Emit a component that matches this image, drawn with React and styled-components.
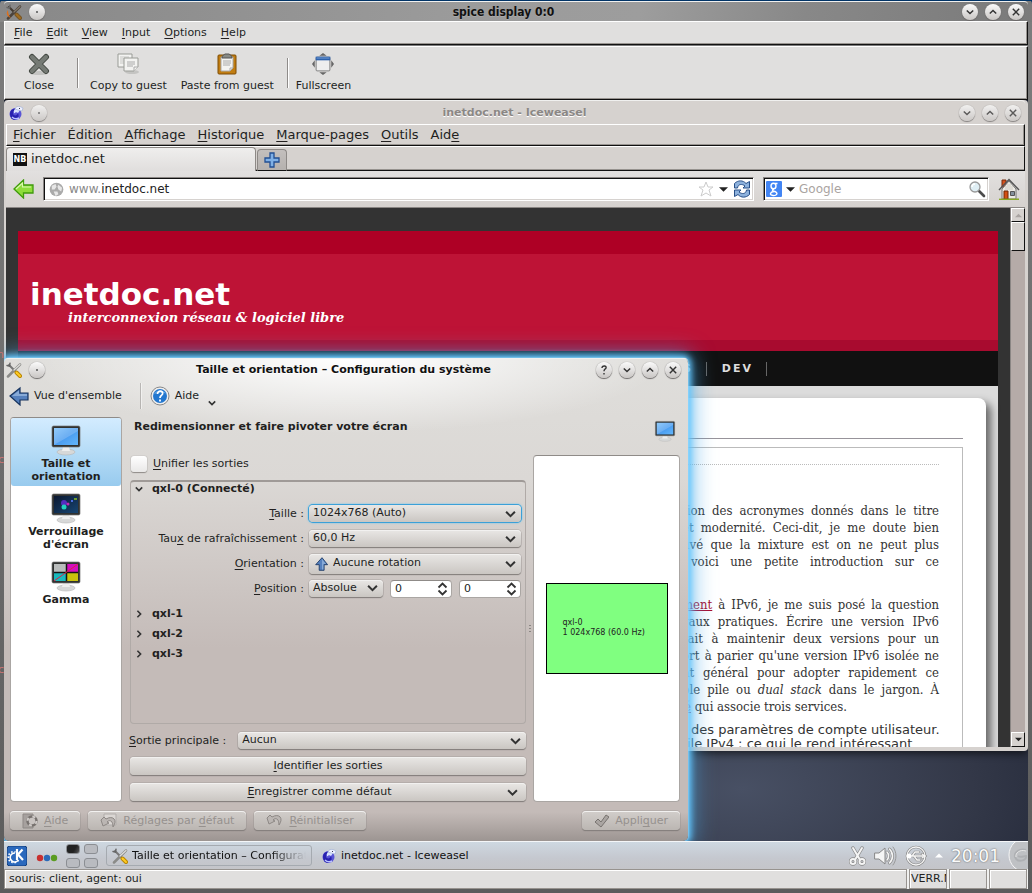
import React from "react";
import styled, { createGlobalStyle, css } from "styled-components";

const sans = '"DejaVu Sans", Verdana, sans-serif';
const condensed = '"DejaVu Sans Condensed", "DejaVu Sans", sans-serif';
const serif = '"DejaVu Serif Condensed", "DejaVu Serif", serif';

const Global = createGlobalStyle`
  * { box-sizing: border-box; }
  body { margin: 0; font: 11px/14px ${sans}; color: #221f1e; background: #003366; overflow: hidden; }
  button, input, select { font: inherit; color: inherit; margin: 0; padding: 0; border: 0; background: none; outline: 0; }
  svg { display: block; flex: none; }
  u { text-underline-offset: 2px; text-decoration-skip-ink: none; }
`;

/* ---------- outer spice window ---------- */

const Screen = styled.main`
  position: relative;
  display: flex;
  flex-direction: column;
  height: 100vh;
  padding: 1px 4px 4px;
  overflow: hidden;
  background: linear-gradient(#003366 0 1px, transparent 1px),
    linear-gradient(100deg, #888 0, #9b9b9b 45%, #9d9d9d 62%, #888 78%, #7a7a7a 100%) top / 100% 22px no-repeat,
    linear-gradient(#7d7d7d, #5c5c5c);
  border-radius: 4px 4px 0 0;
`;

/* Letters of the desktop behind, showing through the window's left border. */
const FrameMark = styled.span`
  position: absolute;
  left: 0;
  top: ${(p) => p.$top}px;
  width: 4px;
  overflow: hidden;
  direction: rtl;
  color: #c97474;
`;

const TitleBar = styled.header`
  display: flex;
  align-items: center;
  gap: 7px;
  flex: none;
  height: ${(p) => p.$h}px;
  padding: 0 ${(p) => p.$right}px 0 2px;
  font-weight: bold;
  font-size: ${(p) => (p.$condensed ? 12 : 11)}px;
  font-family: ${(p) => (p.$condensed ? condensed : sans)};
  color: ${(p) => (p.$dim ? "#8b8785" : "#111")};
  text-shadow: 0 1px 0 ${(p) => (p.$condensed ? "#aaa" : "#fff")};
  border-top: 1px solid #f0f0ef;
  border-radius: 4px 4px 0 0;
`;

const TitleSide = styled.div`
  display: flex;
  align-items: center;
  justify-content: ${(p) => (p.$end ? "flex-end" : "flex-start")};
  gap: 7px;
  flex: ${(p) => (p.$auto ? "none" : "1")};
`;

const TitleText = styled.h1`
  flex: ${(p) => (p.$fill ? "1" : "none")};
  margin: 0;
  font-size: inherit;
  text-align: center;
`;

const RoundButton = styled.button`
  display: flex;
  align-items: center;
  justify-content: center;
  width: 16px;
  height: 16px;
  border-radius: 50%;
  background: linear-gradient(#fafafa, #c9c6c4);
  box-shadow: 0 1px 1px #6b6867, 0 0 1px #777;
  opacity: ${(p) => (p.$dim ? 0.75 : 1)};
`;

const Bar = styled.nav`
  display: flex;
  align-items: center;
  flex: none;
  gap: ${(p) => (p.$large ? 12 : 14)}px;
  height: ${(p) => p.$h}px;
  padding: 0 ${(p) => p.$pad}px;
  font-size: ${(p) => (p.$large ? 13 : 11)}px;
  background: ${(p) => (p.$large ? "#d6d2cf" : "#e0dfde")};
  border: 1px solid #fff;
  border-right-color: #111;
  border-bottom-color: #111;
  box-shadow: inset -1px -1px 0 #97938f;
`;

const SpiceTools = styled(Bar)`
  gap: 0;
  margin-top: 1px;
`;

const ToolButton = styled.button`
  display: flex;
  flex-direction: column;
  align-items: center;
  gap: 4px;
  min-width: ${(p) => (p.$wide ? 64 : 0)}px;
  padding: ${(p) => (p.$last ? "0 3px" : "0 7px")};
`;

const Divider = styled.i`
  width: 2px;
  height: 30px;
  margin: 0 4px 0 6px;
  border-left: 1px solid #8e8b89;
  background: #fff;
`;

const Guest = styled.section`
  display: flex;
  flex-direction: column;
  flex: 1;
  min-height: 0;
`;

const Wallpaper = styled.div`
  position: relative;
  display: flex;
  flex-direction: column;
  flex: 1;
  min-height: 0;
  padding-bottom: 90px;
  overflow: hidden;
  background: radial-gradient(420px 220px at 72% 93%, #485064, #333848 55%, #1c2132 100%);
`;

/* ---------- browser ---------- */

const Browser = styled.article`
  display: flex;
  flex-direction: column;
  flex: 1;
  min-height: 0;
  padding: 0 3px 4px 2px;
  background: #d6d2cf;
  border-radius: 4px;
  box-shadow: 0 2px 8px #000a;
`;

const TabStrip = styled.div`
  display: flex;
  align-items: flex-end;
  gap: 1px;
  flex: none;
  height: 25px;
  border-top: 1px solid #fff;
  border-right: 1px solid #111;
  background: #d6d2cf;
  box-shadow: inset 0 -1px 0 #111, inset 0 -2px 0 #97938f;
`;

const Tab = styled.button`
  display: flex;
  align-items: center;
  gap: 4px;
  width: ${(p) => (p.$active ? 250 : 30)}px;
  height: ${(p) => (p.$active ? 24 : 22)}px;
  padding: 0 6px 1px;
  font-size: 13px;
  border: 1px solid #8d8986;
  border-bottom: ${(p) => (p.$active ? "0" : "1px solid #111")};
  border-radius: 4px 4px 0 0;
  background: ${(p) => (p.$active ? "linear-gradient(#efeeed, #e0dedd)" : "linear-gradient(#c3bfbd, #b5b1ae)")};
`;

const Favicon = styled.b`
  width: 14px;
  background: #111;
  color: #fff;
  font: bold 8px/13px ${sans};
  text-align: center;
`;

const AddressRow = styled.div`
  display: flex;
  align-items: center;
  flex: none;
  gap: 9px;
  height: 37px;
  padding: 0 5px 0 7px;
  background: linear-gradient(#e2e0df, #d6d2cf);
  border-bottom: 1px solid #8a8684;
`;

const Field = styled.div`
  display: flex;
  align-items: center;
  gap: ${(p) => (p.$search ? 4 : 5)}px;
  flex: ${(p) => (p.$search ? "0 0 226px" : "1")};
  height: 24px;
  padding: 0 2px 0 ${(p) => (p.$search ? 2 : 5)}px;
  background: #fff;
  border: 1px solid #8a8684;
  border-right-color: #fff;
  border-bottom-color: #fff;
  box-shadow: inset 1px 1px 0 #111, inset -1px -1px 0 #d6d2cf;
`;

const FieldText = styled.div`
  display: flex;
  flex: 1;
  min-width: 0;
  font: 12px/16px ${sans};
  color: #888;
  label { cursor: text; }
`;

const FieldInput = styled.input`
  flex: 1;
  min-width: 0;
  width: 100%;
  color: #222;
  &::placeholder { color: #aaa4a1; opacity: 1; }
`;

const PageFrame = styled.div`
  display: flex;
  flex: 1;
  min-height: 0;
`;

const Page = styled.div`
  flex: 1;
  min-width: 0;
  padding: 23px 12px 0;
  overflow: hidden;
  background: #333;
`;

const Banner = styled.header`
  height: 120px;
  padding: 46px 12px 0;
  color: #fff;
  background: linear-gradient(#ae0025 0 23px, #be1336 23px 109px, #a80b2f 109px);
`;

const SiteName = styled.h2`
  margin: 0;
  font: bold 31px/34px ${sans};
`;

const Motto = styled.p`
  margin: 0 0 0 38px;
  font: italic bold 13px/14px "DejaVu Serif", serif;
`;

const SiteNav = styled.nav`
  display: flex;
  align-items: center;
  justify-content: flex-end;
  height: 35px;
  padding-right: 231px;
  background: #111;
  font-weight: bold;
  letter-spacing: 2px;
`;

const SiteLink = styled.a`
  padding: 0 13px 0 15px;
  border-right: 1px solid #666;
  color: #ddd;
  text-decoration: none;
`;

const SiteBody = styled.div`
  display: flow-root;
  height: 500px;
  background: #dcdcdc;
`;

const Card = styled.div`
  height: 500px;
  margin: 12px 12px 0;
  padding: 40px 23px 0;
  background: #fff;
  border-radius: 8px;
  box-shadow: 5px 5px 8px #666;
`;

const Inner = styled.section`
  height: 440px;
  margin-top: 8px;
  padding: 16px 23px 0 0;
  border: 1px solid #bbb;
`;

const Rule = styled.hr`
  margin: 0;
  border: 0;
  border-top: 1px ${(p) => (p.$dotted ? "dotted #bbb" : "solid #97939a")};
  padding-top: ${(p) => (p.$dotted ? 37 : 0)}px;
`;

const Paragraph = styled.p`
  width: 257px;
  margin: 0 0 ${(p) => (p.$tight ? 5 : 26)}px auto;
  font: 13px/17px ${serif};
  color: #333;
  a { color: #a80b2f; }
  ${(p) => p.$list && css`font: 13px/14px ${sans}; margin-top: 8px;`}
`;

const Line = styled.span`
  display: block;
  padding-left: ${(p) => p.$start || 0}px;
  white-space: nowrap;
  text-align-last: ${(p) => (p.$loose ? "left" : "justify")};
`;

const Scroll = styled.div`
  display: flex;
  flex-direction: column;
  justify-content: space-between;
  width: 15px;
  background: #b5aba8;
  border-left: 1px solid #8a8684;
`;

const ScrollPart = styled.button`
  display: flex;
  align-items: center;
  justify-content: center;
  width: 14px;
  height: ${(p) => p.$h}px;
  background: #d6d2cf;
  border: 1px solid #fff;
  border-right-color: #111;
  border-bottom-color: #111;
`;

/* ---------- settings dialog ---------- */

const Dialog = styled.section`
  position: absolute;
  left: 0;
  top: 258px;
  bottom: 0;
  width: 684px;
  display: flex;
  flex-direction: column;
  border-radius: 5px;
  background: linear-gradient(transparent 94%, #8e8784bb 100%),
    radial-gradient(320px 75px at 50% 0, #fff, transparent),
    linear-gradient(#dfdedb 0, #dbd8d5 25%, #c4bbb8 60%, #c4bbb8 100%);
  box-shadow: 0 0 2px #bfeaff, 0 0 6px 3px #64c8ff, 0 0 22px 5px #4aa8e6aa;
`;

const DialogTools = styled.div`
  display: flex;
  align-items: center;
  height: 32px;
  padding-left: 5px;
`;

const LinkButton = styled.button`
  display: flex;
  align-items: center;
  gap: 5px;
`;

const ToolDivider = styled(Divider)`
  height: 26px;
  margin: 0 8px 0 18px;
  opacity: 0.5;
`;

const MenuMark = styled.span`
  padding: 14px 0 0 9px;
`;

const DialogBody = styled.div`
  display: flex;
  gap: 7px;
  flex: 1;
  min-height: 0;
  padding: 5px 8px 8px 6px;
`;

const sunken = css`
  background: #fff;
  border: 1px solid #aaa6a3;
  border-top-color: #8f8b88;
  border-radius: 4px;
`;

const Sidebar = styled.nav`
  width: 112px;
  ${sunken}
`;

const SideItem = styled.button`
  display: flex;
  flex-direction: column;
  align-items: center;
  gap: 1px;
  width: 100%;
  padding: 6px 4px 3px;
  font-weight: bold;
  line-height: 13px;
  border-radius: 3px;
  background: ${(p) => (p.$active ? "linear-gradient(#d3ecff, #98cbee)" : "none")};
`;

const Content = styled.div`
  display: flex;
  flex-direction: column;
  flex: 1;
  min-width: 0;
`;

const Heading = styled.div`
  display: flex;
  justify-content: space-between;
  height: 38px;
  padding: 3px 4px 0 5px;
  h2 { margin: 0; font-size: 11px; line-height: 14px; }
`;

const Split = styled.div`
  display: flex;
  flex: 1;
  min-height: 0;
`;

const Settings = styled.form`
  display: flex;
  flex-direction: column;
  flex: 1;
  gap: 8px;
  min-width: 0;
  padding-bottom: 1px;
`;

const CheckLabel = styled.label`
  display: flex;
  align-items: center;
  gap: 6px;
  height: 17px;
  padding-left: 2px;
`;

const Check = styled.input`
  appearance: none;
  width: 16px;
  height: 16px;
  border-radius: 3px;
  background: linear-gradient(#fff, #e9e8e7);
  box-shadow: 0 1px 1px #8f8b88, 0 0 1px #777;
`;

const Group = styled.fieldset`
  display: flex;
  flex-direction: column;
  flex: 1;
  min-width: 0;
  margin: 0 0 0 1px;
  padding: 0 4px;
  border: 1px solid #b0aaa7;
  border-top: 2px solid #9f9a97;
  border-radius: 4px;
`;

const Output = styled.button`
  display: flex;
  align-items: center;
  gap: 9px;
  height: ${(p) => (p.$open ? 14 : 20)}px;
  font-weight: bold;
`;

const FormGrid = styled.div`
  display: grid;
  grid-template-columns: minmax(0, 1fr) 212px;
  grid-auto-rows: 25px;
  align-items: center;
  gap: 0 5px;
  margin: 5px 0 3px;
  > label { text-align: right; }
`;

const Pair = styled.div`
  display: flex;
  gap: 7px;
`;

const raised = css`
  border-radius: 4px;
  background: linear-gradient(#e9e7e5, #cac6c2);
  box-shadow: 0 0 0 1px #a19c9966, 0 1px 1px #6f6a68, inset 0 1px 0 #f2f1f0;
`;

const Picker = styled.span`
  position: relative;
  display: flex;
  flex: ${(p) => (p.$width ? `0 0 ${p.$width}px` : "1")};
  height: ${(p) => (p.$tall ? 20 : 17)}px;
  ${raised}
  ${(p) => p.$focus && css`box-shadow: 0 0 0 1px #3ba0d8, 0 0 2px 1px #5fc0ee;`}
  select {
    appearance: none;
    flex: 1;
    min-width: 0;
    padding: 0 20px 1px ${(p) => (p.$icon ? 24 : 4)}px;
  }
  svg { position: absolute; pointer-events: none; top: 50%; transform: translateY(-50%); }
  svg:last-child { right: 5px; }
  svg:first-child { left: 6px; }
`;

const Spin = styled.span`
  display: flex;
  align-items: center;
  flex: 1;
  height: 18px;
  padding: 0 3px 0 4px;
  ${sunken}
  input { flex: 1; width: 20px; min-width: 0; }
`;

const PrimaryRow = styled.div`
  display: flex;
  align-items: center;
  gap: 12px;
`;

const Action = styled.button`
  display: flex;
  align-items: center;
  justify-content: center;
  gap: 6px;
  height: ${(p) => (p.$tall ? 19 : 18)}px;
  padding: 0 ${(p) => (p.$tall ? 12 : 8)}px;
  margin-left: 1px;
  color: ${(p) => (p.disabled ? "#96918e" : "#221f1e")};
  ${raised}
  ${(p) => p.disabled && css`background: linear-gradient(#d2cecb, #bbb6b2);`}
  span { flex: ${(p) => (p.$tall ? "none" : "1")}; }
`;

const Actions = styled.footer`
  display: flex;
  gap: 7px;
  height: 31px;
  padding: 1px 8px 0 5px;
  ${Action}:last-child { margin-left: auto; }
`;

const Handle = styled.div`
  display: flex;
  align-items: center;
  justify-content: center;
  flex: 0 0 7px;
`;

const Preview = styled.div`
  display: flex;
  align-items: center;
  justify-content: center;
  width: 147px;
  ${sunken}
`;

const Output0 = styled.div`
  width: 122px;
  height: 91px;
  padding: 34px 0 0 16px;
  font-size: 8px;
  line-height: 10px;
  white-space: nowrap;
  color: #222;
  background: #80ff80;
  border: 1px solid #000;
`;

/* ---------- panels at the bottom ---------- */

const TaskBar = styled.footer`
  position: relative;
  display: flex;
  align-items: center;
  flex: none;
  height: 28px;
  padding-left: 3px;
  background: linear-gradient(#ced8e1, #c5c8cf 60%, #c4c5c9);
  border-top: 1px solid #f4f6f8;
`;

const DotsBox = styled.span`
  margin: 4px 0 0 9px;
`;

const Pager = styled.div`
  display: grid;
  grid-template-columns: 14px 14px;
  gap: 4px;
  margin: 0 8px 0 8px;
`;

const Desk = styled.button`
  height: 10px;
  border: 1px solid #8b8e93;
  border-radius: 3px;
  background: ${(p) => (p.$on ? "linear-gradient(120deg, #222 60%, #555)" : "#b9bbc0")};
`;

const Task = styled.button`
  display: flex;
  align-items: center;
  gap: 4px;
  width: 206px;
  height: 21px;
  margin-right: 3px;
  padding: 0 5px;
  overflow: hidden;
  white-space: nowrap;
  color: #111;
  border: 1px solid ${(p) => (p.$active ? "#a5aab0" : "transparent")};
  border-radius: 3px;
  span { overflow: hidden; ${(p) => p.$active && css`mask-image: linear-gradient(90deg, #000 80%, transparent);`} }
`;

const Tray = styled.div`
  display: flex;
  align-items: center;
  gap: 8px;
  margin-left: auto;
`;

const Clock = styled.time`
  font-size: 17px;
  line-height: 20px;
  color: #fbfbfb;
  text-shadow: 0 0 2px #777, 0 0 1px #777;
`;

const StatusBar = styled.footer`
  display: flex;
  flex: none;
  gap: 2px;
  height: 20px;
  padding-right: 1px;
  background: #f0f0ef;
`;

const StatusCell = styled.div`
  flex: ${(p) => (p.$grow ? "1" : "0 0 38px")};
  padding: 2px ${(p) => (p.$grow ? 4 : 1)}px;
  overflow: hidden;
  white-space: nowrap;
  background: #e0dfde;
  border: 1px solid #97938f;
  box-shadow: inset 1px 1px 0 #fff;
`;

/* ---------- drawings ---------- */

const Chevron = ({ dir = "down", size = 9, w = 2 }) => (
  <svg width={size} height={size} viewBox="0 0 10 10" fill="none" stroke="#333" strokeWidth={w}>
    <path d={{ down: "M1 3l4 4 4-4", up: "M1 7l4-4 4 4", right: "M3 1l4 4-4 4" }[dir]} />
  </svg>
);

const SpinArrows = () => (
  <svg width="11" height="14" viewBox="0 0 11 14" fill="none" stroke="#333" strokeWidth="1.8">
    <path d="M1.500 5.500l4-4 4 4M1.500 8.500l4 4 4-4" />
  </svg>
);

const WindowButtons = ({ help, dim }) => (
  <>
    {help && <RoundButton aria-label="Aide contextuelle"><svg width="8" height="10" viewBox="0 0 8 10" fill="none" stroke="#333" strokeWidth="1.400"><path d="M2 3c0-3 5-2.500 4 0-.5 1.200-2 1.300-2 3.200M4 8v1.500" /></svg></RoundButton>}
    <RoundButton $dim={dim} aria-label="Réduire"><Chevron size={8} w={1.800} /></RoundButton>
    <RoundButton $dim={dim} aria-label="Agrandir"><Chevron size={8} dir="up" w={1.800} /></RoundButton>
    <RoundButton $dim={dim} aria-label="Fermer"><svg width="8" height="8" viewBox="0 0 10 10" stroke="#333" strokeWidth="1.800"><path d="M1 1l8 8M9 1l-8 8" /></svg></RoundButton>
  </>
);

const MenuDot = ({ dim }) => (
  <RoundButton $dim={dim} aria-label="Menu"><svg width="2" height="2"><rect width="2" height="2" fill="#777" /></svg></RoundButton>
);

const Tools = ({ dark }) => (
  <svg width="16" height="16" viewBox="0 0 16 16" fill="none" strokeLinecap="round">
    <path d="M3 3l7 7" stroke={dark ? "#443a30" : "#777"} strokeWidth="2" />
    <path d="M1 3.500L3.500 4 4 1.200" stroke="#666" strokeWidth="1.500" />
    <path d="M14 2.500L4 12.500l-2 2" stroke={dark ? "#4d443c" : "#8b8b88"} strokeWidth="2.500" />
    <path d="M14 2.500L8 8" stroke={dark ? "#83796b" : "#dededb"} strokeWidth="1.200" />
    <path d="M10.500 10.500l3.500 3.500" stroke={dark ? "#785626" : "#b98500"} strokeWidth="4" />
    <path d="M10.500 10.500l3.500 3.500" stroke={dark ? "#a06d20" : "#ffcb22"} strokeWidth="2" />
    {dark && <path d="M2 6c-3 4 0 7 3 8-2-2-3-4-3-8" fill="#e0701d" />}
  </svg>
);

const Weasel = () => (
  <svg width="16" height="16" viewBox="0 0 16 16">
    <circle cx="7.500" cy="9" r="6" fill="#5a55d6" />
    <path d="M2 9c0-5 4-6 7-5-3 1-4 2-4 5 1 2 4 2 5-1 2 4-1 7-3 7-3 0-5-3-5-6" fill="#2822b0" />
    <path d="M7 4c3-1 4 0 5 1l-2 3c-1-1-3-1-3 0-1 1-2-2 0-4" fill="#d9e2fd" />
    <path d="M7 4c1-3 4-3 6-2l2 1-1 3-4-1z" fill="#edf0ff" stroke="#8ea2d0" strokeWidth=".5" />
    <path d="M11 3h1v1h-1z" fill="#335" />
    <path d="M4 12c2 2 5 2 7 1" stroke="#b9c1ff" strokeWidth="1.500" fill="none" />
  </svg>
);

const Monitor = ({ kind, size = 32 }) => (
  <svg width={size} height={size} viewBox="0 0 32 32">
    <defs>
      <linearGradient id="screenBlue" x2="1" y2="1"><stop stopColor="#76bdf9" /><stop offset=".5" stopColor="#4a9cf0" /><stop offset="1" stopColor="#62b6fb" /></linearGradient>
      <linearGradient id="screenDark" x2="1" y2="1"><stop stopColor="#0b1830" /><stop offset="1" stopColor="#174572" /></linearGradient>
    </defs>
    <ellipse cx="16" cy="28" rx="9" ry="3" fill="#d7d8d8" stroke="#b5b5b5" strokeWidth=".6" />
    <path d="M13 23h6l1 4h-8z" fill="#eee" />
    <rect x="2" y="2" width="28" height="21" rx="1.500" fill="#303231" stroke="#777" strokeWidth=".7" />
    <rect x="4" y="4" width="24" height="17" fill={kind === "lock" ? "url(#screenDark)" : "url(#screenBlue)"} />
    {!kind && <path d="M4 21L28 7V4H4z" fill="#fff" opacity=".2" />}
    {kind === "lock" && <><circle cx="14" cy="11" r="3" fill="#6530dd" opacity=".8" /><circle cx="14" cy="15" r="2.500" fill="#22d1bf" /><circle cx="18" cy="12" r="1.500" fill="#c426b5" /><path d="M21 9h2" stroke="#4b6de0" strokeWidth="2" /><path d="M24 7h3" stroke="#91c020" strokeWidth="1.500" /></>}
    {kind === "gamma" && <><rect x="4" y="4" width="12" height="8" fill="#b9bcbc" /><rect x="17" y="4" width="11" height="8" fill="#d50dc0" /><rect x="4" y="13" width="12" height="8" fill="#19b9bc" /><rect x="17" y="13" width="11" height="8" fill="#c9c20d" /><path d="M4 12.500h24M16.500 4v17" stroke="#151515" strokeWidth="1.500" /><path d="M4 21L28 4" stroke="#dd2244" /></>}
  </svg>
);

const BlueArrow = ({ up }) => (
  <svg width={up ? 14 : 20} height={up ? 16 : 20} viewBox="0 0 20 20">
    <path transform={up ? "rotate(90 10 10)" : undefined} d="M1 10L11 2v5h8v7h-8v5z" fill="#5580bd" stroke="#16335f" strokeWidth="1.200" />
    <path transform={up ? "rotate(90 10 10)" : undefined} d="M3 10l7-5.500V8h8v2z" fill="#9cbce2" opacity=".7" />
  </svg>
);

const GreenArrow = () => (
  <svg width="21" height="20" viewBox="0 0 21 20"><path d="M1 10L10.500 1v5H20v8h-9.500v5z" fill="#8fdd3c" stroke="#3f9b0b" strokeWidth="1.300" /><path d="M3 10l6.500-6V8H18" fill="none" stroke="#d9f9ad" strokeWidth="1.200" /></svg>
);

const Caret = ({ up, fill = "#222", size = 9 }) => (
  <svg width={size} height="5" viewBox="0 0 10 5"><path d={up ? "M0 5l5-5 5 5z" : "M0 0h10L5 5z"} fill={fill} /></svg>
);

const Globe = () => (
  <svg width="15" height="15" viewBox="0 0 16 16"><circle cx="8" cy="8" r="7.300" fill="#aaa" /><path d="M3 4l4-2 1 3-2 3-3 0zM10 3l4 3-1 4-3-2-1-3zM5 10l4 0 1 3-3 2z" fill="#e6e6e6" /></svg>
);

const Reload = () => (
  <svg width="18" height="18" viewBox="0 0 18 18" fill="#8db1dc" stroke="#274f88"><path d="M1.500 8V3.500C5 0 10 0 13 3.500l3.500-2V8H10l2-2C9 3.500 5 4 4.500 8z" /><path d="M16.500 10v4.500C13 18 8 18 5 14.500l-3.500 2V10H8l-2 2c3 2.500 7 2 7.500-2z" /></svg>
);

const Lens = () => (
  <svg width="18" height="18" viewBox="0 0 18 18" fill="none"><path d="M11 11l5 5" stroke="#4b4b4b" strokeWidth="2.600" strokeLinecap="round" /><circle cx="7" cy="7" r="5" fill="#dfeef4" stroke="#999" strokeWidth="1.300" /><path d="M4 7c0-2 1-3 3-3" stroke="#fff" strokeWidth="1.500" /></svg>
);

const Home = () => (
  <svg width="22" height="22" viewBox="0 0 22 22"><path d="M4 2h4v7H4z" fill="#d4531e" stroke="#762a0c" /><path d="M4 11l7-8 7 8v10H4z" fill="#eceae4" stroke="#777" /><path d="M8 8v4M10 6v6M12 6v6M14 8v4" stroke="#cfccc4" /><path d="M1 12L11 1.500 21 12" fill="none" stroke="#555" strokeWidth="1.400" /><path d="M6 13h4v8H6z" fill="#d34f12" stroke="#702704" /><path d="M12.500 13.500h4v4h-4z" fill="#84909d" stroke="#555" /><path d="M1 21.300h20" stroke="#88a826" strokeWidth="1.400" /></svg>
);

const CloseGlyph = () => (
  <svg width="22" height="22" viewBox="0 0 22 22"><ellipse cx="11" cy="20" rx="9" ry="2" fill="#c4c4c2" /><path d="M4 4l14 14M18 4L4 18" stroke="#444943" strokeWidth="6" strokeLinecap="round" /><path d="M4 4l14 14M18 4L4 18" stroke="#757a74" strokeWidth="4" strokeLinecap="round" /></svg>
);

const CopyGlyph = () => (
  <svg width="22" height="22" viewBox="0 0 22 22" fill="#f3f3f1" stroke="#999b96"><ellipse cx="15" cy="19" rx="7" ry="2" fill="#c4c4c2" stroke="none" /><path d="M1 1h14v13H1z" /><path d="M3 4h9M3 6h9M3 8h4M3 10h4" stroke="#c7c7c4" /><path d="M7 5h14v9l-4 4H7z" /><path d="M17 18v-4h4M10 9h8M10 11h8M10 13h6" stroke="#aaa" /></svg>
);

const PasteGlyph = () => (
  <svg width="22" height="22" viewBox="0 0 22 22"><rect x="2" y="2" width="18" height="19" rx="1" fill="#c17d11" stroke="#7e4d05" /><path d="M5 4h12v11l-3 3H5z" fill="#f3f3f1" stroke="#aaa" /><path d="M7 8h8M7 10h8M7 12h7M14 18v-3h3" stroke="#aaa" fill="none" /><path d="M6 5c0-3 2-3 3-4h4c1 1 3 1 3 4z" fill="#888a85" stroke="#555" /></svg>
);

const FullGlyph = () => (
  <svg width="24" height="22" viewBox="0 0 24 24"><path d="M12 0l4 3H8zM12 24l4-3H8zM0 12l3-4v8zM24 12l-3-4v8z" fill="#666" /><rect x="4.500" y="4.500" width="15" height="15" rx="1" fill="#eee" stroke="#777" /><path d="M4 4h16v4H4z" fill="#2e62ac" /><path d="M5 5.500h14" stroke="#7ba3da" /></svg>
);

const HelpGlyph = () => (
  <svg width="20" height="20" viewBox="0 0 20 20"><circle cx="10" cy="10" r="9" fill="#eee" stroke="#888" /><circle cx="10" cy="10" r="7" fill="#2377cf" /><path d="M4 8c1-4 10-5 12 0-3-2-8-1-12 0" fill="#80bbed" opacity=".6" /><path d="M7.500 8c0-4 6-3.500 5 0-.5 1.500-2.500 1.500-2.500 4M10 13.500v2" stroke="#fff" strokeWidth="1.800" fill="none" /></svg>
);

const KGlyph = () => (
  <svg width="20" height="20" viewBox="0 0 20 20"><rect width="20" height="20" rx="3" fill="#2b69bd" stroke="#113d7c" /><path d="M11 14.500a4.500 4.500 0 1 1-3-7.500" fill="none" stroke="#fff" strokeWidth="1.600" /><path d="M11.500 14a5.500 5.500 0 1 1-3-8" fill="none" stroke="#fff" strokeWidth="1.600" strokeDasharray="1.500 1.800" /><path d="M10 3v11M15.500 3.500L11 8.500l5 5.500" stroke="#fff" strokeWidth="2.200" fill="none" /></svg>
);

const Dots = () => (
  <svg width="22" height="8" viewBox="0 0 22 8"><circle cx="4" cy="4" r="3.200" fill="#c83030" /><circle cx="11" cy="4" r="3.200" fill="#2b6ab8" /><circle cx="18" cy="4" r="3.200" fill="#5b9c20" /></svg>
);

const traySvg = { fill: "none", strokeLinecap: "round" };
const Scissors = () => (
  <svg width="17" height="20" viewBox="0 0 17 20" {...traySvg}>
    {[["#888", 3.400], ["#f5f5f5", 2]].map(([c, w]) => <g key={c} stroke={c} strokeWidth={w}><path d="M4 2l6.500 11M13 2L6.500 13" /><circle cx="4" cy="15.500" r="2.500" /><circle cx="13" cy="15.500" r="2.500" /></g>)}
  </svg>
);
const Speaker = () => (
  <svg width="23" height="22" viewBox="0 0 23 22" {...traySvg}>
    <path d="M1 8h4l6-5v16l-6-5H1z" fill="#f5f5f5" stroke="#888" />
    {[["#888", 3], ["#f5f5f5", 1.600]].map(([c, w]) => <g key={c} stroke={c} strokeWidth={w}><path d="M13 7c2 2 2 6 0 8M15.500 4c4 4 4 10 0 14" /></g>)}
    <path d="M19 2c4 5 4 13 0 18" stroke="#999" />
  </svg>
);
const Usb = () => (
  <svg width="22" height="22" viewBox="0 0 22 22" {...traySvg}>
    {[["#888", 2.600], ["#f5f5f5", 1.300]].map(([c, w]) => <g key={c} stroke={c} strokeWidth={w}><circle cx="11" cy="11" r="9" /><path d="M3 11h15M7 11l3-4h4M9 11l3 4h3M17 9l3 2-3 2" /></g>)}
    <circle cx="4" cy="11" r="2.500" fill="#fff" />
  </svg>
);
const Cashew = () => (
  <svg width="20" height="27" viewBox="0 0 20 27" fill="none"><circle cx="18" cy="13" r="17" fill="#bfc1c4" stroke="#f5f5f5" /><path d="M18 8c-6-2-12 2-11 7 2 6 12 4 11-1-3 0-5 2-8 0" stroke="#aeb0b3" strokeWidth="2" /><path d="M18 9c-6-2-11 2-10 6" stroke="#e7e7e7" /></svg>
);

const HelpBook = () => (
  <svg width="16" height="16" viewBox="0 0 16 16" fill="none"><path d="M1 1h10v14H1z" fill="#a6a19e" stroke="#8d8885" /><circle cx="10" cy="8" r="4.500" fill="#c9c4c1" stroke="#77726f" strokeWidth="2.500" /><circle cx="10" cy="8" r="4.500" stroke="#d1cdca" strokeWidth="2" strokeDasharray="3 4" /></svg>
);
const UndoGlyph = ({ sheet }) => (
  <svg width="17" height="16" viewBox="0 0 17 16" fill="none">{sheet && <path d="M4 1h12v11H4z" fill="#dad6d3" stroke="#b1adab" />}<path d="M1 7l2 6 6-3-2-1c3-3 6-1 6 5 5-7 0-12-7-8L4 4z" transform={sheet ? undefined : "translate(0 -2)"} fill="#bbb6b3" stroke="#8d8885" /></svg>
);
const TickGlyph = () => (
  <svg width="15" height="14" viewBox="0 0 15 14"><path d="M1 8l3-3 3 3 5-7 3 2-8 10z" fill="#aaa5a2" stroke="#77736f" /></svg>
);
const Grip = () => (
  <svg width="2" height="8" viewBox="0 0 2 8"><path d="M1 0v8" stroke="#8b8683" strokeWidth="2" strokeDasharray="1 2" /></svg>
);

/* ---------- page ---------- */

/* A menu title with its access key underlined. */
const Key = ({ text, at = 0 }) => (
  <span>{text.slice(0, at)}<u>{text[at]}</u>{text.slice(at + 1)}</span>
);

const spiceMenus = ["File", "Edit", "View", "Input", "Options", "Help"];
const browserMenus = [["Fichier", 0], ["Édition", 6], ["Affichage", 0], ["Historique", 0], ["Marque-pages", 0], ["Outils", 0], ["Aide", 3]];

const Select = ({ id, value, icon, ...rest }) => (
  <Picker $icon={!!icon} {...rest}>
    {icon}
    <select id={id}><option>{value}</option></select>
    <Chevron size={11} w={1.800} />
  </Picker>
);

export default function App() {
  return (
    <Screen>
      <Global />
      <FrameMark $top={348} aria-hidden="true">n</FrameMark>
      <FrameMark $top={453} aria-hidden="true">c</FrameMark>
      <FrameMark $top={663} aria-hidden="true">c</FrameMark>
      <TitleBar $h={20} $right={4} $condensed>
        <TitleSide $auto><Tools dark /><MenuDot /></TitleSide>
        <TitleText $fill>spice display 0:0</TitleText>
        <TitleSide $auto><WindowButtons /></TitleSide>
      </TitleBar>
      <Bar $h={24} $pad={9}>
        {spiceMenus.map((m) => <button key={m}><Key text={m} /></button>)}
      </Bar>
      <SpiceTools as="div" $h={54} $pad={2}>
        <ToolButton $wide><CloseGlyph />Close</ToolButton>
        <Divider />
        <ToolButton><CopyGlyph />Copy to guest</ToolButton>
        <ToolButton><PasteGlyph />Paste from guest</ToolButton>
        <Divider />
        <ToolButton $last><FullGlyph />Fullscreen</ToolButton>
      </SpiceTools>

      <Guest>
        <Wallpaper>
          <Browser>
            <TitleBar as="div" $h={24} $right={4} $dim>
              <TitleSide><Weasel /><MenuDot dim /></TitleSide>
              <TitleText as="h2">inetdoc.net - Iceweasel</TitleText>
              <TitleSide $end><WindowButtons dim /></TitleSide>
            </TitleBar>
            <Bar $h={22} $pad={6} $large>
              {browserMenus.map(([m, at]) => <button key={m}><Key text={m} at={at} /></button>)}
            </Bar>
            <TabStrip>
              <Tab $active><Favicon>NB</Favicon>inetdoc.net</Tab>
              <Tab aria-label="Nouvel onglet"><svg width="16" height="16" viewBox="0 0 16 16"><path d="M6 1h4v5h5v4h-5v5H6v-5H1V6h5z" fill="#7fb0e6" stroke="#224f93" strokeWidth="1.300" /></svg></Tab>
            </TabStrip>
            <AddressRow>
              <GreenArrow />
              <Field>
                <Globe />
                <FieldText>
                  <label htmlFor="url">www.</label>
                  <FieldInput id="url" defaultValue="inetdoc.net" />
                </FieldText>
                <svg width="16" height="16" viewBox="0 0 16 16"><path d="M8 1l2 5h5l-4 3 2 6-5-3-5 3 2-6-4-3h5z" fill="#fff" stroke="#ccc" /></svg>
                <Caret /><Reload />
              </Field>
              <Field $search>
                <svg width="16" height="16" viewBox="0 0 16 16"><rect width="16" height="16" rx="1" fill="#4285f4" /><g fill="none" stroke="#fff" strokeWidth="1.400"><ellipse cx="7.500" cy="5" rx="2.500" ry="2.800" /><path d="M9 2.500h2.500M8 8c-3 1-1 2 1 2.500 4 2 1 4.500-2 4-4-.5-3-3.500 1-4" /></g></svg>
                <Caret />
                <FieldText><FieldInput aria-label="Recherche" placeholder="Google" /></FieldText>
                <Lens />
              </Field>
              <Home />
            </AddressRow>
            <PageFrame>
              <Page>
                <Banner>
                  <SiteName>inetdoc.net</SiteName>
                  <Motto>interconnexion réseau &amp; logiciel libre</Motto>
                </Banner>
                <SiteNav>
                  <SiteLink href="#guides">GUIDES</SiteLink>
                  <SiteLink href="#dev">DEV</SiteLink>
                </SiteNav>
                <SiteBody>
                  <Card>
                    <Rule />
                    <Inner>
                      <Rule $dotted />
                      <Paragraph>
                        <Line>tion des acronymes donnés dans le titre</Line>
                        <Line>et modernité. Ceci-dit, je me doute bien</Line>
                        <Line>uvé que la mixture est on ne peut plus</Line>
                        <Line $start={9}>voici une petite introduction sur ce</Line>
                      </Paragraph>
                      <Paragraph $tight>
                        <Line><a href="#ipv6">ment</a> à IPv6, je me suis posé la question</Line>
                        <Line>vaux pratiques. Écrire une version IPv6</Line>
                        <Line>rait à maintenir deux versions pour un</Line>
                        <Line>ort à parier qu'une version IPv6 isolée ne</Line>
                        <Line>nt général pour adopter rapidement ce</Line>
                        <Line>ble pile ou <em>dual stack</em> dans le jargon. À</Line>
                        <Line $loose $start={2}><a href="#services">é</a> qui associe trois services.</Line>
                      </Paragraph>
                      <Paragraph $list>
                        <Line $loose $start={9}>des paramètres de compte utilisateur.</Line>
                        <Line $loose $start={5}>ile IPv4 : ce qui le rend intéressant</Line>
                      </Paragraph>
                    </Inner>
                  </Card>
                </SiteBody>
              </Page>
              <Scroll>
                <div>
                  <ScrollPart $h={14} aria-label="Haut"><Caret up fill="#aaa5a2" size={7} /></ScrollPart>
                  <ScrollPart $h={29} aria-label="Curseur" />
                </div>
                <ScrollPart $h={15} aria-label="Bas"><Caret size={7} /></ScrollPart>
              </Scroll>
            </PageFrame>
          </Browser>

          <Dialog>
            <TitleBar as="div" $h={22} $right={7}>
              <TitleSide><Tools /><MenuDot /></TitleSide>
              <TitleText as="h2">Taille et orientation – Configuration du système</TitleText>
              <TitleSide $end><WindowButtons help /></TitleSide>
            </TitleBar>
            <DialogTools>
              <LinkButton><BlueArrow />Vue d'ensemble</LinkButton>
              <ToolDivider />
              <LinkButton><HelpGlyph />Aide</LinkButton>
              <MenuMark><Chevron size={8} /></MenuMark>
            </DialogTools>
            <DialogBody>
              <Sidebar>
                <SideItem $active><Monitor />Taille et orientation</SideItem>
                <SideItem><Monitor kind="lock" />Verrouillage d'écran</SideItem>
                <SideItem><Monitor kind="gamma" />Gamma</SideItem>
              </Sidebar>
              <Content>
                <Heading><h2>Redimensionner et faire pivoter votre écran</h2><Monitor size={22} /></Heading>
                <Split>
                  <Settings>
                    <CheckLabel><Check type="checkbox" /><Key text="Unifier les sorties" /></CheckLabel>
                    <Group>
                      <Output type="button" $open><Chevron size={8} />qxl-0 (Connecté)</Output>
                      <FormGrid>
                        <label htmlFor="size"><Key text="Taille :" /></label>
                        <Select id="size" value="1024x768 (Auto)" $focus />
                        <label htmlFor="rate"><Key text="Taux de rafraîchissement :" at={3} /></label>
                        <Select id="rate" value="60,0 Hz" />
                        <label htmlFor="turn"><Key text="Orientation :" /></label>
                        <Select id="turn" value="Aucune rotation" icon={<BlueArrow up />} $tall />
                        <label htmlFor="pos"><Key text="Position :" /></label>
                        <Pair>
                          <Select id="pos" value="Absolue" $width={74} />
                          <Spin><input aria-label="X" defaultValue="0" /><SpinArrows /></Spin>
                          <Spin><input aria-label="Y" defaultValue="0" /><SpinArrows /></Spin>
                        </Pair>
                      </FormGrid>
                      {["qxl-1", "qxl-2", "qxl-3"].map((q) => (
                        <Output type="button" key={q}><Chevron size={8} dir="right" />{q}</Output>
                      ))}
                    </Group>
                    <PrimaryRow>
                      <label htmlFor="main"><Key text="Sortie principale :" /></label>
                      <Select id="main" value="Aucun" />
                    </PrimaryRow>
                    <Action type="button"><Key text="Identifier les sorties" /></Action>
                    <Action type="button"><Key text="Enregistrer comme défaut" /><Chevron size={11} w={1.800} /></Action>
                  </Settings>
                  <Handle><Grip /></Handle>
                  <Preview><Output0>qxl-0<br />1 024x768 (60.0 Hz)</Output0></Preview>
                </Split>
              </Content>
            </DialogBody>
            <Actions>
              <Action $tall disabled><HelpBook /><Key text="Aide" /></Action>
              <Action $tall disabled><UndoGlyph sheet /><Key text="Réglages par défaut" at={13} /></Action>
              <Action $tall disabled><UndoGlyph /><Key text="Réinitialiser" /></Action>
              <Action $tall disabled><TickGlyph /><Key text="Appliquer" at={5} /></Action>
            </Actions>
          </Dialog>
        </Wallpaper>

        <TaskBar>
          <KGlyph />
          <DotsBox><Dots /></DotsBox>
          <Pager>{[1, 2, 3, 4].map((n) => <Desk key={n} $on={n === 1} aria-label={`Bureau ${n}`} />)}</Pager>
          <Task $active><Tools /><span>Taille et orientation – Configuration</span></Task>
          <Task><Weasel /><span>inetdoc.net - Iceweasel</span></Task>
          <Tray>
            <Scissors /><Speaker /><Usb /><Caret up fill="#fff" size={8} />
            <Clock>20:01</Clock><Cashew />
          </Tray>
        </TaskBar>
      </Guest>

      <StatusBar>
        <StatusCell $grow>souris: client, agent: oui</StatusCell>
        <StatusCell>VERR.NUM</StatusCell>
        <StatusCell />
        <StatusCell />
      </StatusBar>
    </Screen>
  );
}
